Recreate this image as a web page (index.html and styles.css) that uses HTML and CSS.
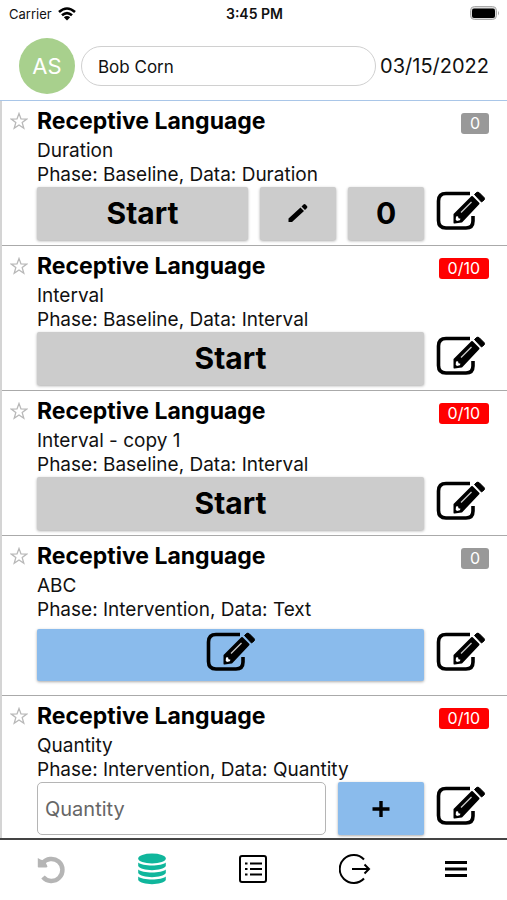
FILE: index.html
```html
<!DOCTYPE html>
<html lang="en">
<head>
<meta charset="utf-8">
<meta name="viewport" content="width=device-width, initial-scale=1">
<title>Data collection</title>
<link rel="stylesheet" href="styles.css">
</head>
<body>
<svg class="defs" aria-hidden="true">
  <symbol id="edit" viewBox="0 0 50 48">
    <path d="M34 3.500H10Q2.500 3.500 2.500 11V30.500Q2.500 38 10 38H30Q37 38 37 31V26" fill="none" stroke="currentColor" stroke-width="3.600"/>
    <path d="M18.500 24.500 36 7 42.500 13.500 25.500 31.500 18.500 32.500Z" fill="currentColor" stroke="currentColor" stroke-width="2" stroke-linejoin="round"/>
    <path d="M38.500 4.500 40.500 2.500Q42 1.500 43.500 3L48 7.500Q49 9 48 10L45.500 12Z" fill="currentColor" stroke="currentColor" stroke-width="1"/>
    <path d="M25 22.500 35.500 12" stroke="#ccc" stroke-width="1.200"/>
    <path d="M20 26.500 22 26.200 22.500 28.300 24.500 28.700 23.800 30.300 21 31 19.700 29.700Z" fill="#fff"/>
  </symbol>
  <symbol id="star" viewBox="0 0 18 18">
    <path d="M9 1.500 11 6.900 16.700 7.100 12.200 10.600 13.800 16.200 9 13 4.200 16.200 5.800 10.600 1.300 7.100 7 6.900Z" fill="none" stroke="currentColor" stroke-width="1.300"/>
  </symbol>
</svg>
<div class="app">
  <div class="status">
    <div class="carrier">Carrier
      <svg width="18" height="14" viewBox="0 0 18 14" fill="none" stroke="#000" stroke-width="2.600"><path d="M1 5Q9-2 17 5M4 8.300Q9 3.800 14 8.300"/><path d="M9 13.500 5.800 10.300Q9 7.800 12.200 10.300Z" fill="#000" stroke="none"/></svg>
    </div>
    <div class="clock">3:45 PM</div>
    <div class="battery">
      <svg width="30" height="15" viewBox="0 0 30 15"><rect x=".500" y=".500" width="26" height="13" rx="4" fill="#ddd" stroke="#aaa"/><rect x="2" y="2.500" width="23" height="9.500" rx="2" fill="#000"/><path d="M28 5Q30 7 28 9.500Z" fill="#aaa"/></svg>
    </div>
  </div>
  <header class="header">
    <div class="avatar">AS</div>
    <input class="client" type="text" value="Bob Corn" aria-label="Client">
    <time class="date" datetime="2022-03-15">03/15/2022</time>
  </header>
  <main class="list">
    <article class="card">
      <button class="star" aria-label="Favorite"><svg><use href="#star"/></svg></button>
      <div class="head"><h2>Receptive Language</h2><span class="badge">0</span></div>
      <p>Duration</p>
      <p>Phase: Baseline, Data: Duration</p>
      <div class="actions">
        <button class="btn wide">Start</button>
        <button class="btn" aria-label="Edit value"><svg width="20" height="20" viewBox="0 0 20 20"><path d="M.500 19V15.500L12.500 4.500 16 8 4 19ZM13.500 3.500 15.500 1.500Q16.500 .500 17.500 1.500L19 3Q19.800 4 19 5L17 7Z"/></svg></button>
        <button class="btn">0</button>
      </div>
      <button class="edit" aria-label="Edit"><svg><use href="#edit"/></svg></button>
    </article>
    <article class="card">
      <button class="star" aria-label="Favorite"><svg><use href="#star"/></svg></button>
      <div class="head"><h2>Receptive Language</h2><span class="badge due">0/10</span></div>
      <p>Interval</p>
      <p>Phase: Baseline, Data: Interval</p>
      <div class="actions"><button class="btn wide">Start</button></div>
      <button class="edit" aria-label="Edit"><svg><use href="#edit"/></svg></button>
    </article>
    <article class="card">
      <button class="star" aria-label="Favorite"><svg><use href="#star"/></svg></button>
      <div class="head"><h2>Receptive Language</h2><span class="badge due">0/10</span></div>
      <p>Interval - copy 1</p>
      <p>Phase: Baseline, Data: Interval</p>
      <div class="actions"><button class="btn wide">Start</button></div>
      <button class="edit" aria-label="Edit"><svg><use href="#edit"/></svg></button>
    </article>
    <article class="card roomy">
      <button class="star" aria-label="Favorite"><svg><use href="#star"/></svg></button>
      <div class="head"><h2>Receptive Language</h2><span class="badge">0</span></div>
      <p>ABC</p>
      <p>Phase: Intervention, Data: Text</p>
      <div class="actions"><button class="btn wide blue" aria-label="Write entry"><svg class="pen"><use href="#edit"/></svg></button></div>
      <button class="edit" aria-label="Edit"><svg><use href="#edit"/></svg></button>
    </article>
    <article class="card">
      <button class="star" aria-label="Favorite"><svg><use href="#star"/></svg></button>
      <div class="head"><h2>Receptive Language</h2><span class="badge due">0/10</span></div>
      <p>Quantity</p>
      <p>Phase: Intervention, Data: Quantity</p>
      <div class="actions">
        <input class="quantity" type="text" placeholder="Quantity" aria-label="Quantity">
        <button class="btn blue add" aria-label="Add"><svg width="18" height="18" viewBox="0 0 18 18" stroke="#000" stroke-width="3.400"><path d="M9 1V17M.500 9H17.500"/></svg></button>
      </div>
      <button class="edit" aria-label="Edit"><svg><use href="#edit"/></svg></button>
    </article>
  </main>
  <nav class="tabs">
    <button aria-label="Undo"><svg width="32" height="32" viewBox="0 0 32 32"><path d="M7.500 10.500A11 11 0 1 1 8 24" fill="none" stroke="#b5b5b5" stroke-width="4.500"/><path d="M2.800 5 5.500 6.500 10 8 12.500 13.500 11.500 14.500H3.500L2.800 14Z" fill="#b5b5b5"/></svg></button>
    <button aria-label="Data"><svg width="32" height="34" viewBox="0 0 32 34" fill="#10b69c"><ellipse cx="16" cy="6.500" rx="13.800" ry="5"/><path id="disc" d="M2.200 10.500C6 14.500 26 14.500 29.800 10.500V14C27 19.500 5 19.500 2.200 14Z"/><use href="#disc" y="7"/><use href="#disc" y="14"/></svg></button>
    <button aria-label="List"><svg width="32" height="32" viewBox="0 0 32 32" fill="none" stroke="#000" stroke-width="2"><rect x="3" y="3" width="26" height="26" rx="2"/><path d="M13 10.500H25M13 16H25M13 21.500H25"/><path d="M8 10.500H10.500M8 16H10.500M8 21.500H10.500"/></svg></button>
    <button aria-label="Sign out"><svg width="32" height="32" viewBox="0 0 32 32" fill="none" stroke="#000" stroke-width="2"><path d="M25 6.500A14 14 0 1 0 25 25.500M13 16H30M25.500 11.500 30 16 25.500 20.500"/></svg></button>
    <button aria-label="Menu"><svg width="32" height="32" viewBox="0 0 32 32" stroke="#000" stroke-width="3"><path d="M5 9.500H27M5 16H27M5 22.500H27"/></svg></button>
  </nav>
</div>
</body>
</html>
```
FILE: styles.css
```css
* { box-sizing: border-box; }
body { margin: 0; background: #fff; color: #111; font-family: Inter, "Liberation Sans", sans-serif; }
button { border: 0; padding: 0; background: none; color: #000; font: inherit; display: flex; align-items: center; justify-content: center; }
h2, p { margin: 0; }
.defs { display: none; }
.app { display: flex; flex-direction: column; height: 100vh; }

.status { display: grid; grid-template-columns: 1fr auto 1fr; align-items: center; height: 27px; padding: 0 7px 0 9px; font-size: 13px; }
.carrier { display: flex; align-items: center; gap: 6px; }
.clock { font-weight: 600; font-size: 14px; }
.battery { display: flex; justify-content: flex-end; }

.header { display: flex; align-items: center; flex: none; height: 74px; padding: 4px 18px 0 19px; border-bottom: 1px solid #a9c6e8; }
.avatar { display: grid; place-items: center; flex: none; width: 56px; height: 56px; border-radius: 50%; background: #a8d08d; color: #fff; font-size: 22px; }
.client { flex: 1; min-width: 0; height: 40px; margin: 0 4px 0 6px; padding: 3px 17px 0 16px; border: 1px solid #d0d0d0; border-radius: 20px; background: #fff; color: #111; font: 17px Inter, sans-serif; }
.date { font-size: 20px; }

.list { flex: 1; min-height: 0; overflow-y: auto; scrollbar-width: none; border-left: 2px solid #d4d4d4; }
.card { display: grid; grid-template-columns: 35px minmax(0, 1fr) 65px; padding: 5px 18px 5px 0; border-bottom: 1px solid #aaa; }
.star { grid-row: 1; align-items: flex-start; padding: 6px 2px 0 0; color: #b8b8b8; }
.star svg { width: 18px; height: 18px; }
.head { grid-column: 2 / 4; display: flex; justify-content: space-between; align-items: flex-start; height: 33px; }
.head h2 { color: #000; font-size: 23px; font-weight: 700; line-height: 31px; }
.badge { min-width: 28px; margin-top: 7px; padding: 0 9px; border-radius: 3px; background: #999; color: #fff; font-size: 16px; line-height: 21px; text-align: center; }
.badge.due { background: #f00; }
.card p { grid-column: 2 / 4; font-size: 19px; line-height: 24px; }
.actions { grid-column: 2; display: flex; gap: 12px; height: 53px; }
.btn { flex: none; width: 76px; padding-bottom: 2px; border-radius: 2px; background: #ccc; box-shadow: 0 1px 3px #0005; font-size: 30px; font-weight: 700; }
.btn.wide { flex: 1; }
.btn.blue { padding: 0; background: #8abbec; }
.btn.add { width: 86px; }
.pen { width: 50px; height: 48px; }
.edit { grid-column: 3; justify-content: flex-end; padding-right: 3px; }
.edit svg { width: 50px; height: 48px; }
.roomy { padding-bottom: 14px; }
.roomy .actions, .roomy .edit { margin-top: 7px; height: 52px; }
.quantity { flex: 1; min-width: 0; padding: 0 7px; border: 1px solid #b5b5b5; border-radius: 5px; background: #fff; font: 20px Inter, sans-serif; }
.quantity::placeholder { color: #666; }

.tabs { display: grid; grid-template-columns: repeat(5, 1fr); flex: none; height: 62px; padding-bottom: 3px; border-top: 2px solid #444; background: #fff; }
```
